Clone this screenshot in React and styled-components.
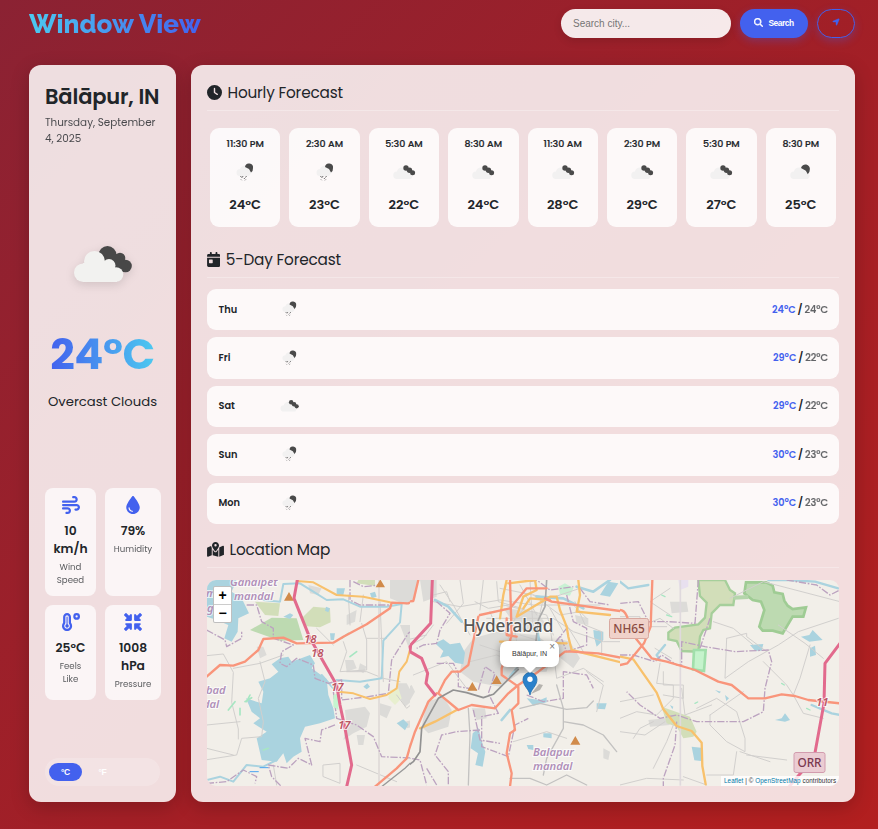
import React from "react";
import styled, { createGlobalStyle } from "styled-components";
import {
  FaClock, FaCalendarDay, FaMapLocationDot, FaMagnifyingGlass, FaLocationArrow,
  FaWind, FaDroplet, FaTemperatureHigh, FaMinimize,
} from "react-icons/fa6";

const Global = createGlobalStyle`
  * { box-sizing: border-box; }
  body {
    margin: 0;
    font-family: Poppins, Inter, sans-serif;
    color: #212529;
  }
  h1, h2, h3, p { margin: 0; }
`;

const Page = styled.div`
  height: 829px;
  padding: 9px 23px 0 29px;
  background: linear-gradient(135deg, #8b2233 0%, #a31f26 55%, #b21f1f 100%);
  overflow: hidden;
`;
const Header = styled.header`
  display: flex;
  align-items: center;
  height: 29px;
  margin-bottom: 27px;
`;
const Brand = styled.h1`
  font-family: Raleway, Lato, sans-serif;
  font-weight: 800;
  font-size: 26px;
  line-height: 32px;
  letter-spacing: 0.05px;
  margin-right: auto;
  white-space: nowrap;
  background: linear-gradient(90deg, #4cc9f0, #4361ee);
  background-clip: text;
  color: transparent;
`;
const SearchInput = styled.input`
  width: 170px;
  height: 29px;
  border: 0;
  border-radius: 15px;
  padding: 0 12px;
  background: rgba(255, 255, 255, 0.9);
  font: 10px "Liberation Sans", Arial, sans-serif;
  box-shadow: 0 3px 9px rgba(0, 0, 0, 0.12);
  &::placeholder { color: #757575; }
`;
const Button = styled.button`
  display: flex;
  align-items: center;
  justify-content: center;
  gap: 5px;
  width: ${(p) => p.$width}px;
  height: 29px;
  margin-left: 9px;
  padding: 0 0 1px;
  border-radius: 15px;
  border: ${(p) => (p.$outline ? "1px solid #4361ee" : "0")};
  background: ${(p) => (p.$outline ? "transparent" : "#4361ee")};
  color: ${(p) => (p.$outline ? "#4361ee" : "#fff")};
  font: 700 8.4px/12px "Liberation Sans", Arial, sans-serif;
  letter-spacing: -0.45px;
  box-shadow: 0 3px 9px rgba(67, 97, 238, 0.3);
  svg {
    font-size: ${(p) => (p.$outline ? 8 : 9)}px;
    margin-bottom: 2px;
    stroke: currentColor;
    stroke-width: 24px;
  }
`;

const Main = styled.main`
  display: grid;
  grid-template-columns: 147px 664px;
  gap: 15px;
  height: 737px;
`;
const Panel = styled.section`
  display: flex;
  flex-direction: column;
  padding: 16px;
  border-radius: 12px;
  background: rgba(255, 255, 255, 0.85);
  box-shadow: 0 5px 19px rgba(0, 0, 0, 0.2);
`;

const City = styled.h2`
  font-size: 21px;
  font-weight: 600;
  line-height: 32px;
  letter-spacing: -0.15px;
  white-space: nowrap;
`;
const DateText = styled.p`
  height: 126px;
  margin-top: 2px;
  font-size: 10.4px;
  line-height: 16px;
  letter-spacing: -0.02px;
  opacity: 0.8;
`;
const Conditions = styled.div`
  display: flex;
  flex-direction: column;
  align-items: center;
  height: 247px;
`;
const Temperature = styled.div`
  margin-top: 41px;
  font-size: 43px;
  font-weight: 700;
  line-height: 62px;
  letter-spacing: -0.4px;
  background: linear-gradient(90deg, #4361ee, #4cc9f0);
  background-clip: text;
  color: transparent;
`;
const Description = styled.div`
  margin-top: 7px;
  font-size: 13.2px;
  line-height: 20px;
  white-space: nowrap;
`;
const Stats = styled.div`
  display: grid;
  grid-template-columns: 51px 56px;
  grid-template-rows: 108px 95px;
  gap: 9px;
`;
const Stat = styled.div`
  display: flex;
  flex-direction: column;
  align-items: center;
  text-align: center;
  padding-top: 8px;
  border-radius: 8px;
  background: rgba(255, 255, 255, 0.7);
  svg { color: #4361ee; font-size: 18px; margin-bottom: 8px; }
`;
const StatValue = styled.div`
  font-size: 12.3px;
  font-weight: 600;
  line-height: 18px;
`;
const StatLabel = styled.div`
  margin-top: 3px;
  font-size: 8.6px;
  line-height: 13px;
  opacity: 0.75;
`;
const UnitToggle = styled.div`
  display: flex;
  align-items: center;
  gap: 4px;
  height: 28px;
  margin-top: auto;
  padding: 0 4px;
  border-radius: 14px;
  background: rgba(255, 255, 255, 0.2);
`;
const Unit = styled.button`
  width: 33px;
  height: 18px;
  padding: 0 0 1px;
  border: 0;
  border-radius: 9px;
  background: ${(p) => (p.$active ? "#4361ee" : "transparent")};
  color: #fff;
  font: 700 8.5px/12px "Liberation Sans", Arial, sans-serif;
  letter-spacing: -0.3px;
`;

const SectionTitle = styled.h3`
  display: flex;
  align-items: center;
  gap: 5.5px;
  height: 30px;
  margin-bottom: ${(p) => p.$after}px;
  padding-bottom: 6px;
  border-bottom: 1px solid rgba(255, 255, 255, 0.3);
  font-size: 15.3px;
  font-weight: 400;
  letter-spacing: -0.19px;
  svg { width: ${(p) => p.$icon}px; height: 15px; flex: none; }
`;
const HourGrid = styled.div`
  display: grid;
  grid-template-columns: repeat(8, 1fr);
  gap: 9px;
  height: 99px;
  margin: 0 3px 21px;
`;
const HourCard = styled.div`
  display: flex;
  flex-direction: column;
  align-items: center;
  padding-top: 9px;
  border-radius: 9px;
  background: rgba(255, 255, 255, 0.82);
  svg { margin-top: 7px; }
`;
const HourTime = styled.div`
  font-size: 9.5px;
  font-weight: 500;
  line-height: 14px;
  white-space: nowrap;
  -webkit-text-stroke: 0.2px;
`;
const HourTemp = styled.div`
  margin-top: 7px;
  font-size: 13px;
  font-weight: 600;
  line-height: 20px;
`;
const Days = styled.div`
  display: flex;
  flex-direction: column;
  gap: 6.9px;
  height: 235px;
  margin-bottom: 14px;
`;
const Day = styled.div`
  flex: 1;
  display: grid;
  grid-template-columns: 58px 30px 1fr;
  align-items: center;
  padding: 0 11px 0 11.5px;
  border-radius: 9px;
  background: rgba(255, 255, 255, 0.82);
  font-size: 9.8px;
  font-weight: 600;
`;
const Range = styled.div`
  text-align: right;
  font-size: 9.7px;
  word-spacing: -0.4px;
`;
const High = styled.span`color: #4361ee;`;
const Low = styled.span`
  font-weight: 500;
  opacity: 0.7;
  -webkit-text-stroke: 0.2px;
`;
const Slash = styled.span`font-size: 10.3px;`;

const MapFrame = styled.div`
  position: relative;
  height: 206px;
  border-radius: 9px;
  overflow: hidden;
  background: #f2efe9;
  > svg { display: block; }
`;
const Zoom = styled.div`
  position: absolute;
  left: 6px;
  top: 6px;
  width: 19px;
  border: 1px solid rgba(0, 0, 0, 0.25);
  border-radius: 2px;
  background: #fff;
`;
const ZoomButton = styled.div`
  height: 17px;
  text-align: center;
  color: #000;
  font: 700 14px/17px "Liberation Sans", Arial, sans-serif;
  & + & { height: 18px; border-top: 1px solid #ccc; }
`;
const Popup = styled.div`
  position: absolute;
  left: 293px;
  top: 61px;
  width: 59px;
  height: 26px;
  border-radius: 7px;
  background: #fff;
  color: #333;
  font: 7.1px/26px "Liberation Sans", Arial, sans-serif;
  text-align: center;
  box-shadow: 0 2px 8px rgba(0, 0, 0, 0.4);
  &::after {
    content: "";
    position: absolute;
    left: 24px;
    top: 26px;
    border: solid transparent;
    border-width: 6px 6px 0;
    border-top-color: #fff;
  }
`;
const Close = styled.span`
  position: absolute;
  right: 4px;
  top: 0;
  color: #757575;
  font: 10px/11px "Liberation Sans", Arial, sans-serif;
`;
const Attribution = styled.div`
  position: absolute;
  right: 0;
  bottom: 0;
  width: 118px;
  height: 10px;
  padding-left: 3px;
  background: rgba(255, 255, 255, 0.8);
  color: #333;
  font: 6.3px/10px "Liberation Sans", Arial, sans-serif;
  letter-spacing: 0.07px;
  white-space: nowrap;
  span { color: #0078a8; }
`;

const BigCloudSvg = styled.svg`
  margin-top: 5px;
  overflow: visible;
  filter: drop-shadow(0 3px 5px rgba(0, 0, 0, 0.12));
`;
function BigCloud() {
  return (
    <BigCloudSvg width="58" height="36" viewBox="0 0 58 36">
      <g fill="#484848">
        <circle cx="33.500" cy="9" r="9" />
        <circle cx="46" cy="12" r="5.300" />
        <circle cx="51.500" cy="20" r="6.300" />
        <path d="M30 8h14l10 12-5 6H32z" />
      </g>
      <g fill="#f2f2f0">
        <circle cx="9.300" cy="26.700" r="9.300" />
        <circle cx="20.500" cy="15.500" r="10.500" />
        <circle cx="35" cy="19.500" r="6.500" />
        <circle cx="42" cy="28.500" r="7.300" />
        <path d="M9 17h12l14 0 8 11v8H9z" />
      </g>
    </BigCloudSvg>
  );
}

function WeatherIcon({ kind, size }) {
  return (
    <svg width={size} height={size} viewBox="0 0 30 30">
      <g fill="#f2f1f1">
        {kind === "rain" ? (
          <path d="M10 18a3.500 3.500 0 0 1 0-7a5 5 0 0 1 7-3l5 6-3 4z" />
        ) : (
          <path d="M8 21a3.700 3.700 0 0 1 0-7.500a5 5 0 0 1 8-3l8 7-2 3.500z" />
        )}
      </g>
      {kind === "clouds" && (
        <g fill="#4a4a4a">
          <circle cx="17" cy="10" r="2.700" />
          <circle cx="20.500" cy="12.200" r="2.700" />
          <circle cx="23.600" cy="14.800" r="2.500" />
        </g>
      )}
      {kind === "broken" && (
        <path d="M15 10a4.400 4.400 0 0 1 8.800 1.800 6 6 0 0 1-2 4.500l-2-3.500z" fill="#4a4a4a" />
      )}
      {kind === "rain" && (
        <>
          <path d="M15 9a4 4 0 0 1 8 1 5 5 0 0 1-2 4.500l-2-3.500z" fill="#4a4a4a" />
          <path d="M10.500 18l1 1.500M13 18l-.7 1.500M14 21l.7-1M16.500 18l-1 1.500M11 21.500l.7.700M15 22.300l.8-.8" stroke="#666" strokeWidth="1" fill="none" />
        </>
      )}
    </svg>
  );
}

const C = {
  trunk: "#e26a8d", primary: "#f9957b", secondary: "#f8c16c", road: "#d1cfcd",
  water: "#aad3df", admin: "#bca3c0", wood: "#bddab1", park: "#d2deb9", urban: "#dcdbd8",
};
function Lines({ d, c, w = 6, dash }) {
  return <path d={d} fill="none" stroke={c} strokeWidth={w} strokeDasharray={dash} strokeLinejoin="round" strokeLinecap={dash ? "butt" : "round"} />;
}
const ADMIN_DASH = "22 5 5 5";

function WestMap() {
  return (
    <g transform="translate(-7 -45) scale(.33333)">
      <path fill={C.urban} d="M435 525l60-10 15 20-10 40-40 20-30 20 10-40zM435 375l25 0 10 25-30 10zM590 445l30 0 25 45-30 25-20-35zM540 505l35 10-15 35-20-10zM600 270l40 0 10 35-25 30zM325 150l40 10-10 20-25-5zM570 135h90v50l-40 25-50-20zM170 335l20 0 10 25-20 10zM470 600l25 0-5 30-15 0zM480 385l20 10-10 20-15-10zM440 240l30-15-5 35-25 10zM615 560l40-10v20l-35 10z" />
      <path fill={C.park} d="M165 200l75 5-5 38-40-3zM305 250l35-35 50 5 2 42-32 15-40-3zM475 135h50v18l-55-8z" />
      <path fill={C.wood} d="M150 285l65-37 75 2 20 65-70 2z" />
      <path fill="#e8efcf" d="M570 465l25-5 10 30-20 20-20-20z" />
      <path fill={C.water} d="M20 135h90l-15 35 30 20 22 45-32 15-2 40-18 30-22-10 12-40-35-15-30-10zM240 370l25-5 10 15 55-20 15 25-10 15 45 32 5 48 15 40 5 30-45 15-45 10-15 35 5 40-25 15-20 20-10-30-20 25-45-5-15-65 30-20-40-25 20-15-25-20-17-40 47 15 5-35-15-30 35-10 25-20-20-22zM250 245l20-10 10 5-10 12zM410 160l25 0-5 20-20 0zM390 295l15 0-3 20-10 0zM378 215l12 5-5 12-10-5zM590 565l20-12 15 15-10 18zM510 175l15-5 5 15-15 5zM490 455l12-10 8 10-10 8z" />
      <Lines c={C.road} w={3} d="M20 362l50-5 30 55-5 90 20 80 0 30M100 400l80-15 70-25M180 380l15 60-20 50 15 70-5 45-60 5-15 50-95 15M20 570l100-10M20 640l80 20M430 320l10 30-20 60 80-5 0-90-15-50M500 310l60 0M440 410l60 0 50 20 50 10M370 690l50-5 0 60-50-20zM470 690l120 50M220 690l10 60M590 480l30 40 30-25M540 200l10 240M445 180l5 90M350 280l50 50M480 260l10-80" />
      <path d="M537 135V752" stroke="#e2ddda" strokeWidth="6" />
      <Lines c={C.water} w={6} d="M190 195l50 5 10-53 50-2 40 25 40 25 50-2 50 22 80 0 45-8-5 55-50 55-5 113-65 10-70-5M20 735l40-10 40 15 40-50 50 5 40-20M365 420l35 40M640 220l20-20" />
      <Lines c="#4aa3f0" w={3} d="M150 710h25M180 698h25" />
      <Lines c={C.admin} w={4} dash={ADMIN_DASH} d="M20 285l55 30 5 20 45-25 0-20M140 210l30 0 15 50 35 20 0 30 60 20-35 20-5 35 20 10 30-25 50 20 5 40 40 15 40-10 0 60 80-10 60-10 10-100 50-80 40-30M450 135l0 60 30 15 90 0M400 470l10 80 60 20 50 35 25 60 115 5M405 570l-40 15-5 35-45-10 20 80-40-20-30 30-60-10 10 35 30 30M20 745l60-5 50-35 40 20-5 20M460 140l30 15 50-5" />
      <path fill="#d18b4a" d="M252 197l15-26 15 26zM527 157l14-24 14 24z" />
      <path fill="#c5f5d0" d="M400 480l15-5v50l-15-10z" />
      <Lines c="#a7e6c2" w={5} d="M85 525l20-25M120 520v20M150 480l-10 20M425 310l20-15M470 350l-20 15M135 500l20-12M190 645l15-5" />
      <Lines c={C.secondary} d="M290 138l50 4 70 38 80 5 80 17M415 470l45 5 50 17 50-12 30-20 8-50 22-30 15-55" />
      <Lines c={C.primary} w={7} d="M20 425l40-35 40 2 35-12 40-35 15-33 60-4 40 17 110-2 30-18 70-37 70-48 5-17 50 2 20-10 15-45M525 755l65-55 30-30 20-70 20-70" />
      <Lines c="#999" w={4} d="M545 755l70-55 30-30 15-55" />
      <Lines c={C.trunk} w={9} d="M292 135l-10 55 48 120 80 140 10 60 15 70 20 110-15 65M660 300l-30 35 5 30 25 8" />
    </g>
  );
}
function CenterMap() {
  return (
    <g transform="translate(193 -5) scale(.33333)">
      <path fill={C.urban} d="M220 190l70-20 120 10 50 40-20 70-80 5-60 40-80-15-40-30 10-60zM80 380l50-15 25 40-10 50-60 20-20-20zM60 15h50v50l-40 15zM0 15h55l-10 60-45 5zM470 190l40 10 30 50-20 30-50-40zM5 350l30-20 10 20-20 35-20 0zM215 400l40 0 5 30-30 5zM310 100l100 10 30 40-80 20zM610 520l20 10-5 25-15-5zM525 120l40 10 0 20-35-5z" />
      <path fill={C.water} d="M105 205l25-12 20 15 30-5 15 30-5 35-25-5-20-20-25 5 10-20zM218 475l18-15 8 35 12 35-8 45-22-5 8-35-22-15zM580 165l30 5 0 25-20 20-8-30zM0 435l20-5-5 35-15 0zM380 370l40 5 20-8 0 15-40 10zM430 475l25 0 0 15-25-3zM590 385l30 0-5 18-25-2zM380 510l20 0 0 15-15-3zM600 60l25-40 30 5-25 40z" />
      <path fill="#c9f1d4" d="M475 35l20-10 25 15-10 22-30-5z" />
      <Lines c={C.road} w={3} d="M100 80l80 15 120-20 100 15 200 0M120 30l40 60 50 90M180 15l10 70-50 60M250 15l-10 90M100 150l-30 40-40 20M40 300l100-40 60 80M0 200l80-20M260 130l200 0 60 40 90 30 50 0M300 40l150 30 90-30M310 90l130 30 20 60M390 20l10 150M350 120l-30 60 50 60M450 150l20 160 80-30 60 40M500 490l-60-20-100 30M560 290l50 40-20 80M525 80l30 70 50 20 0 70M330 150l80 20M360 180l100 30M240 210l60 20 80-10M210 260l80-20 50 20M100 60l40-10 10 30M225 80l40 20 60-10M290 20l5 60 70 20M400 60l80 60 60-10M270 110l20 50 40 20M380 90l-40 50 10 60M430 70l-20 90M450 100l40 70M500 150l50 80M500 70l60 60M320 170l20 60M360 30l50 90" />
      <Lines c="#c3c2c1" w={4} d="M205 400l5 80-5 150M470 330l20 70 0 60-50 90-10 50M360 400l60-15 80 18 60-5 20-20M490 440l60 10 60 30 40 50M330 610l60 0 50 20 60-30 60 30" />
      <Lines c={C.water} w={8} d="M105 75l40 20 40 45M410 65l80 5 60 30M530 35l50 15 50-35M330 405l-25 30M350 280l-20 25M410 160l10 50" />
      <Lines c={C.admin} w={4} dash={ADMIN_DASH} d="M110 80l40 35-30 50-10 40-40 5-20 10M110 265l50 0 15 30 0 40 60 10 20-70 30 20-20 60 30 60-50 10 0 90 80 30 20-95 40-20M0 545l60 10 20 75M240 465l-70 5-45 10-20 60 40 50 0 40M220 405l20 90 60 10M80 580l30 50M380 360l50 20 60-10 0-80 70 10 20 40M500 60l20 80 40 20 0 50-60 20-20-50M360 200l100 10 40-50M390 20l20-5 40 30 70-10M540 40l30 40 60 10" />
      <Lines c="#aaaaaa" w={5} d="M440 15l-5 80-20 40-10 90-60 60" />
      <Lines c={C.secondary} w={7} d="M0 290l25-45M60 460l45-20 65-35M300 130l10-70 10-45M325 25l80-10 5 30-40 20-20 60 100-60 20 0 10 40 20 50 5 30 10 40 160 40M535 15l5 45-10 50 100 10M300 200l200 5M370 100l20-30 60 5" />
      <Lines c={C.primary} w={7} d="M0 83l40-5 15-63M330 15l5 165-30 100 0 20 50 35 0 50-20 20 10 60-15 10-10 60 15 60-5 40M235 125l-30 145-25 20-25 0-20 25-20 40 60 50 40-15 70 10 40-45 30-25 60-40 80-60 20 0 80 5 130 25M240 120l90-20 50-60 60 0M435 70l20 10 205 28M320 130l0 50 30 5M0 570l25-40 20-60 40-90 25-25" />
      <Lines c={C.trunk} w={9} d="M97 15l-5 130-60 65-2 20 35 20 18 45-5 30 27 35" />
      <Lines c="#929292" w={5} d="M0 590l40-30 20-30 5-70 50-90 45-25 40 8 50 15 30-10 75-75" />
      <path fill="#d18b4a" d="M202 347l15-26 15 26zM275 327l15-26 15 26zM511 509l15-26 15 26z" />
    </g>
  );
}
function EastMap() {
  return (
    <g transform="translate(413 -5) scale(.33333)">
      <path fill={C.urban} d="M150 80l50 0 5 30-50 5zM85 435l50-5 15 20-60 5z" />
      <path fill="#e8e0ef" d="M175 15h30v20l-25 10z" />
      <path fill={C.park} stroke="#a6cf9b" strokeWidth="7" d="M235 15h80l15 30 15 10-5 35-40 0-25 25-5 45-20 5-10 20-5 45-50-2-15-30-25-5 0-20 20-15 70-10 20-20 5-45-20-20z" />
      <path fill={C.wood} stroke="#9fcc94" strokeWidth="8" d="M378 22l60 0 20 10 5 20 25 5 5 20 10 15 15 10 40-5-8 28-32 0-30 50-30-8-30 0-10-12 15-50-10-25-25-5-25-20z" />
      <path fill="none" stroke="#b5d5ab" strokeWidth="12" d="M340 68l45-2" />
      <path fill={C.park} d="M125 395l85 30 20 45-10 15-30 5-20-35-30-10z" />
      <path fill="#c5f3cc" stroke="#a1dfab" strokeWidth="8" d="M222 225l35 0-5 63-33-5z" />
      <path fill={C.water} d="M215 515l28 3 0 40-20-2zM390 210l40-3-5 20-20 0zM543 185l25-5 10-15 20 20 10 10-40 5zM570 220l15-8 3 28-18 5zM465 435l20-5 10-15 15 20-15 5zM285 345l18 5-5 5zM315 360l12 10-8 8zM150 390l10 5-3 8z" />
      <Lines c={C.road} w={3} d="M0 430l50-20 60 10 50-50 0-40-50-5 10-60M0 470l75 10 60-40M0 630l80-20 110 5M190 605l70 25M350 530l-10 70-80 0M270 420l0 30 50 50 55 30 0-40-25-80-60-40-60 30M320 190l-5 120 70-50 90-50 60-40 120-40M320 190l60-15 0 10 60 45M270 420l100-70M570 210l-30 100-20 50 30 55 60 15M610 250l-55-45-80-55M360 530l90 30M380 540l120 15M430 260l70 70 20 30M330 70l100-50 230 60M280 140l60 20 60 50M100 440l-40 20-20 30M130 290l0 40 60 0 0 40-60-10M150 40l-60 40 60 40M0 125l60 0 0 30 80 0M0 180l120-50 40 30M105 220l50 30M185 340l10 80 80-30M0 380l100-20M100 580l40-80 20-50" />
      <path d="M181 15V632" stroke="#dfd9dd" strokeWidth="5" />
      <Lines c={C.water} w={7} d="M0 20l25 20 60-10M445 15l60 0 80 5 70 20M110 240l25-30M575 390l60 25 25 5M110 240l10 15" />
      <Lines c={C.admin} w={4} dash={ADMIN_DASH} d="M235 15l-10 130-80-5-60 0-30-60-55 5M0 240l40 0 65 20 20-20 45 30 15 0 0-70 70 15 90 15 100-5 10 35-20 80-5 70-60 30-120 0-20 0-60-20-50 10-60-40-40-40M170 440l-5 70-35 100 0 25M240 220l30-90M500 15l90 15 40 30 30-15" />
      <Lines c={C.secondary} w={7} d="M0 245l40 8 70 100 20 50 40 50 45 15 30 35 2 70 10 55" />
      <Lines c={C.primary} w={7} d="M97 15l-5 140-20 50-50 60-22 5M0 105c20 0 25 30 35 70l60 75 45 10 85 25 70 35 40 10 50 40 50 0 50-12 40 5 40 12 95 10" />
      <Lines c={C.trunk} w={9} d="M660 205l-45 60-3 120-30 165-45 50-30 35" />
      <Lines c="#a7e6c2" w={4} d="M140 120l15 5M125 60l10 5M485 325l8 5M560 400l10 5M225 385l8-4" />
    </g>
  );
}
const PlaceName = styled.text`
  font-family: "Noto Sans", sans-serif;
  font-size: ${(p) => p.$size}px;
  font-style: ${(p) => (p.$italic ? "italic" : "normal")};
  font-weight: ${(p) => p.$weight || 400};
  fill: ${(p) => p.$color};
  stroke: rgba(255, 255, 255, 0.7);
  stroke-width: ${(p) => (p.$plain ? 0 : 2)}px;
  paint-order: stroke;
`;
function Shield({ x, y, w, label, fill, stroke, color }) {
  return (
    <g>
      <rect x={x} y={y} width={w} height="20" rx="2" fill={fill} stroke={stroke} />
      <PlaceName x={x + w / 2} y={y + 14.500} textAnchor="middle" $size={11.8} $weight={500} $color={color} $plain>{label}</PlaceName>
    </g>
  );
}
function MapCanvas() {
  const mandal = { $size: 11.2, $italic: true, $weight: 600, $color: "#b08fb8" };
  const exit = { $size: 11.5, $italic: true, $weight: 600, $color: "#bb5663" };
  return (
    <svg width="632" height="206" viewBox="0 0 632 206">
      <defs>
        <clipPath id="west"><rect width="203" height="206" /></clipPath>
        <clipPath id="center"><rect x="203" width="210" height="206" /></clipPath>
        <clipPath id="east"><rect x="413" width="219" height="206" /></clipPath>
      </defs>
      <g clipPath="url(#west)"><WestMap /></g>
      <g clipPath="url(#center)"><CenterMap /></g>
      <g clipPath="url(#east)"><EastMap /></g>
      <PlaceName x="23" y="6" {...mandal}>Gandipet</PlaceName>
      <PlaceName x="27" y="19.500" {...mandal}>mandal</PlaceName>
      <PlaceName x="-1" y="17" {...mandal}>m</PlaceName>
      <PlaceName x="0" y="32" {...mandal}>g</PlaceName>
      <PlaceName x="-1" y="114" {...mandal}>bad</PlaceName>
      <PlaceName x="-4" y="128" {...mandal}>dal</PlaceName>
      <PlaceName x="97" y="63" {...exit}>18</PlaceName>
      <PlaceName x="104" y="76.500" {...exit}>18</PlaceName>
      <PlaceName x="124" y="111" {...exit}>17</PlaceName>
      <PlaceName x="131" y="149" {...exit}>17</PlaceName>
      <PlaceName x="609" y="126" {...exit}>11</PlaceName>
      <PlaceName x="256" y="51.500" $size={17.2} $weight={500} $color="#5a5857">Hyderabad</PlaceName>
      <PlaceName x="326" y="175.500" {...mandal}>Balapur</PlaceName>
      <PlaceName x="326" y="189.500" {...mandal}>mandal</PlaceName>
      <Shield x={402.500} y={38.500} w={39} label="NH65" fill="#f0d2ca" stroke="#d8a9a0" color="#8a4b42" />
      <Shield x={587} y={172.500} w={31} label="ORR" fill="#ebccd3" stroke="#d29cae" color="#7a3850" />
      <path d="M324 114l8-10 4 1-3 5z" fill="#000" opacity=".25" />
      <path d="M323 115c-1-6-7-9-7-15.500a7 7 0 0 1 14 0c0 6.500-6 9.500-7 15.500z" fill="#2a81cb" stroke="#2571ad" strokeWidth=".8" />
      <circle cx="323" cy="99.300" r="2.700" fill="#fff" />
    </svg>
  );
}

const HOURS = [
  ["11:30 PM", "rain", "24°C"], ["2:30 AM", "rain", "23°C"], ["5:30 AM", "clouds", "22°C"],
  ["8:30 AM", "clouds", "24°C"], ["11:30 AM", "clouds", "28°C"], ["2:30 PM", "clouds", "29°C"],
  ["5:30 PM", "clouds", "27°C"], ["8:30 PM", "broken", "25°C"],
];
const DAYS = [
  ["Thu", "rain", "24°C", "24°C"], ["Fri", "rain", "29°C", "22°C"], ["Sat", "clouds", "29°C", "22°C"],
  ["Sun", "rain", "30°C", "23°C"], ["Mon", "rain", "30°C", "23°C"],
];

export default function App() {
  return (
    <Page>
      <Global />
      <Header>
        <Brand>Window View</Brand>
        <SearchInput placeholder="Search city..." />
        <Button $width={68}><FaMagnifyingGlass />Search</Button>
        <Button $width={38} $outline aria-label="Use my location"><FaLocationArrow /></Button>
      </Header>
      <Main>
        <Panel>
          <City>Bālāpur, IN</City>
          <DateText>Thursday, September<br />4, 2025</DateText>
          <Conditions>
            <BigCloud />
            <Temperature>24°C</Temperature>
            <Description>Overcast Clouds</Description>
          </Conditions>
          <Stats>
            <Stat><FaWind /><StatValue>10<br />km/h</StatValue><StatLabel>Wind<br />Speed</StatLabel></Stat>
            <Stat><FaDroplet /><StatValue>79%</StatValue><StatLabel>Humidity</StatLabel></Stat>
            <Stat><FaTemperatureHigh /><StatValue>25°C</StatValue><StatLabel>Feels<br />Like</StatLabel></Stat>
            <Stat><FaMinimize /><StatValue>1008<br />hPa</StatValue><StatLabel>Pressure</StatLabel></Stat>
          </Stats>
          <UnitToggle><Unit $active>°C</Unit><Unit>°F</Unit></UnitToggle>
        </Panel>
        <Panel>
          <SectionTitle $icon={15} $after={17}><FaClock />Hourly Forecast</SectionTitle>
          <HourGrid>
            {HOURS.map(([time, kind, temp]) => (
              <HourCard key={time}>
                <HourTime>{time}</HourTime>
                <WeatherIcon kind={kind} size={30} />
                <HourTemp>{temp}</HourTemp>
              </HourCard>
            ))}
          </HourGrid>
          <SectionTitle $icon={13.3} $after={11}><FaCalendarDay />5-Day Forecast</SectionTitle>
          <Days>
            {DAYS.map(([day, kind, high, low]) => (
              <Day key={day}>
                <span>{day}</span>
                <WeatherIcon kind={kind} size={25} />
                <Range><High>{high}</High> <Slash>/</Slash> <Low>{low}</Low></Range>
              </Day>
            ))}
          </Days>
          <SectionTitle $icon={17} $after={12}><FaMapLocationDot />Location Map</SectionTitle>
          <MapFrame>
            <MapCanvas />
            <Zoom><ZoomButton>+</ZoomButton><ZoomButton>−</ZoomButton></Zoom>
            <Popup>Bālāpur, IN<Close>×</Close></Popup>
            <Attribution><span>Leaflet</span> | © <span>OpenStreetMap</span> contributors</Attribution>
          </MapFrame>
        </Panel>
      </Main>
    </Page>
  );
}
